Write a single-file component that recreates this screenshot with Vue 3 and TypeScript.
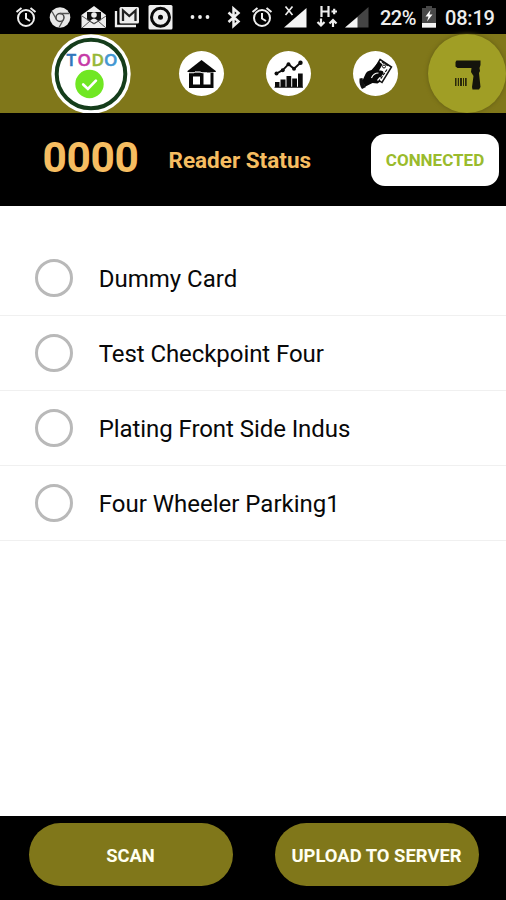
<script setup lang="ts">
interface Checkpoint {
  id: number
  name: string
  key: string
}

const checkpoints: Checkpoint[] = [
  { id: 1, name: 'Dummy Card', key: 'dummy' },
  { id: 2, name: 'Test Checkpoint Four', key: 'test' },
  { id: 3, name: 'Plating Front Side Indus', key: 'plating' },
  { id: 4, name: 'Four Wheeler Parking1', key: 'parking' },
]
</script>

<template>
  <div class="screen">
    <header class="status-bar">
      <svg class="system-icons" width="376" height="34" viewBox="0 0 376 34" fill="none" stroke="#eee" stroke-width="2">
        <g id="alarm">
          <circle cx="26" cy="18" r="8" />
          <path d="M26 13v5.500l4 2.500M16.500 12l5-4M35.500 12l-5-4" />
        </g>
        <circle cx="60" cy="17.500" r="10.300" fill="#e8e8e8" stroke="none" />
        <circle cx="60" cy="17.500" r="4" stroke="#444" stroke-width="1.500" />
        <path d="M60 13.500h9M56.500 19.500l-4.500-8M63.500 19.500l-4.500 8" stroke="#555" stroke-width="1.300" />
        <path d="M81.500 15L94 6l12 9v13H81.500z" fill="#eee" stroke="none" />
        <path d="M87 12h14v8l-7 4-7-4z" fill="#111" stroke="none" />
        <circle cx="94" cy="15" r="2.800" fill="#eee" stroke="none" />
        <path d="M90 21q4-5 8 0l-4 2z" fill="#eee" stroke="none" />
        <path d="M82 16l12 8 12-8M82 28l8-7M106 28l-8-7" stroke="#555" stroke-width="1" />
        <path d="M116 11v15h20" stroke-width="2.300" />
        <rect x="119.500" y="7" width="19.500" height="16.500" rx="1.500" fill="#eee" stroke="none" />
        <path d="M123 21V10.500l6.300 5.500 6.200-5.500V21" stroke="#222" stroke-width="2.300" />
        <rect x="148.500" y="5" width="24" height="24.500" rx="1.500" fill="#eee" stroke="none" />
        <circle cx="160.500" cy="17.300" r="9" stroke="#080808" stroke-width="3" />
        <circle cx="160.500" cy="17.300" r="2.500" fill="#080808" stroke="none" />
        <g fill="#eee" stroke="none"><circle cx="192.500" cy="17" r="1.900" /><circle cx="200" cy="17" r="1.900" /><circle cx="207.500" cy="17" r="1.900" /></g>
        <path d="M228.500 12.500l10 9-5 4.500V8.500l5 4.500-10 9" stroke-width="2.500" />
        <use href="#alarm" x="236" />
        <path d="M306.500 8v19.500H284z" fill="#f4f4f4" stroke="none" />
        <path d="M285.500 6.500l7 8.500M292.500 6.500l-7 8.500" stroke-width="1.700" />
        <path d="M321.500 6v11M328.500 6v11M321.500 11.500h7M331.500 11.500h5.500M334.200 8.800v5.400" stroke-width="2.200" />
        <path d="M321 18.500v7M317.500 22l3.500 3.500 3.500-3.500M333 27v-7M329.500 23.500L333 20l3.500 3.500" stroke-width="2.200" />
        <path d="M368.500 7v20.500H345z" fill="#444" stroke="none" />
        <path d="M357.500 17v10.500H345z" fill="#f4f4f4" stroke="none" />
      </svg>
      <span class="battery-level">22%</span>
      <svg class="battery" width="14" height="22" viewBox="0 0 14 22">
        <path d="M4 0h6v2h4v20H0V2h4z" fill="#484848" />
        <path d="M0 17h14v4.500H0z" fill="#f4f4f4" />
        <path d="M8.500 4L3.500 10.500H6.500L5 15.500l5.500-7H7.500z" fill="#fff" />
      </svg>
      <time class="clock">08:19</time>
    </header>

    <nav class="toolbar">
      <div class="logo">
        <svg class="logo-ring" width="80" height="80" viewBox="0 0 80 80">
          <circle cx="40" cy="40" r="39.700" fill="#fff" />
          <circle cx="40" cy="40" r="34.300" fill="none" stroke="#153d1b" stroke-width="4" />
          <circle cx="38.500" cy="50" r="14.200" fill="#70e722" />
          <path d="M32.200 50.500l4.700 4.400 8-8.300" fill="none" stroke="#fff" stroke-width="2.700" stroke-linecap="round" />
        </svg>
        <div class="logo-text"><b class="letter-t">T</b><b class="letter-o">O</b><b class="letter-d">D</b><b class="letter-last">O</b></div>
      </div>

      <button class="nav-button home" aria-label="Home">
        <svg width="45" height="45" viewBox="0 0 45 45">
          <path d="M8.500 20L22.500 9l14.300 11v1H8.500z" fill="#080808" />
          <path d="M10 21.500h24.500V37H10z" fill="#080808" />
          <path d="M14 25.500h7v8h-7zM24.500 22h7v11.500h-7z" fill="#fff" />
          <path d="M10 21.800h5l1-1h5l2 1h5" fill="none" stroke="#fff" stroke-width=".8" />
        </svg>
      </button>
      <button class="nav-button stats" aria-label="Statistics">
        <svg width="45" height="45" viewBox="0 0 45 45" fill="#0c0c0c">
          <path d="M9 31h4.500v5.500H9zM14.500 28.500h5v8h-5zM20.500 25h4.700v11.500h-4.700zM26.200 27.500h4.800v9h-4.800zM32 22.500h4.700v14H32zM8.500 35.800h28.500v1H8.500z" />
          <path d="M10.500 22.500l6.200-3.300 5.800-6 5.500 4.500 6.500-6" fill="none" stroke="#0c0c0c" stroke-width="1.900" />
          <circle cx="10.500" cy="22.500" r="2" /><circle cx="16.700" cy="19.200" r="2" /><circle cx="22.500" cy="13.200" r="2" /><circle cx="28" cy="17.700" r="2" /><circle cx="34.500" cy="11.700" r="2.200" />
        </svg>
      </button>
      <button class="nav-button pay" aria-label="Payment">
        <svg width="45" height="45" viewBox="0 0 45 45">
          <path d="M27 8.500L38.500 16 29 31.500 18 24z" fill="#fff" stroke="#111" stroke-width="1.500" />
          <path d="M29 11l6.500 4.300M34 18.500L27.500 28" fill="none" stroke="#111" stroke-width="1.200" stroke-dasharray="3 1" />
          <path d="M12.500 23q1-3 6-4l7.500-8.500 3.500 3-3.500 6q5-.5 4.500 3l-4 5 1 3-3 2-5-.5-7 3.500-3.500-5z" fill="#080808" />
          <path d="M18.500 27q2-5 7-5M24.500 29.500l2.500-3" fill="none" stroke="#fff" stroke-width="1.200" />
          <circle cx="31" cy="15.500" r="1.500" fill="none" stroke="#111" />
          <path d="M6.500 27.500l3-.5q1 6 3.500 9l-4 2q-3-4-2.500-10.500z" fill="#111" />
        </svg>
      </button>
      <button class="nav-button scanner" aria-label="Scanner">
        <svg width="78" height="79" viewBox="0 0 78 79">
          <path d="M28.500 26.500h24v4.500l-1 3 .5 3-1 2 1.500 14-1.500 2.500h-6.500l-.5-2.500 1.500-11-2.500-4 .5-4H29.500l-2-1.500v-4.500z" fill="#15140c" />
          <path d="M27 44h1.500v8H27zM29.800 44h1.200v8h-1.200zM32 44h2v8h-2zM35 44h1v8h-1zM37 44h1.700v8H37z" fill="#2b290b" />
        </svg>
      </button>
    </nav>

    <section class="reader">
      <strong class="count">0000</strong>
      <span class="reader-label">Reader Status</span>
      <span class="connection">CONNECTED</span>
    </section>

    <main class="list">
      <label v-for="item in checkpoints" :key="item.id" class="row">
        <span class="radio"></span>
        <span class="row-name" :class="item.key">{{ item.name }}</span>
      </label>
    </main>

    <footer class="actions">
      <button class="action scan">SCAN</button>
      <button class="action upload">UPLOAD TO SERVER</button>
    </footer>
  </div>
</template>

<style>
body {
  margin: 0;
}
</style>

<style scoped>
.screen {
  width: 506px;
  height: 900px;
  display: flex;
  flex-direction: column;
  overflow: hidden;
  background: #fff;
  font-family: Roboto, sans-serif;
}
button {
  border: 0;
  padding: 0;
  font-family: inherit;
}
svg {
  display: block;
  flex: none;
}
.status-bar {
  height: 34px;
  flex: none;
  display: flex;
  align-items: center;
  background: #000;
  color: #eee;
  font-size: 20px;
  font-weight: 500;
  line-height: 34px;
}
.battery-level {
  width: 46px;
  padding-left: 4px;
  box-sizing: border-box;
  letter-spacing: -0.5px;
  padding-top: 2px;
}
.clock {
  margin-left: 9px;
  padding-top: 2px;
  letter-spacing: -0.2px;
}
.toolbar {
  height: 79px;
  flex: none;
  display: flex;
  align-items: center;
  background: #80771a;
}
.logo {
  position: relative;
  width: 80px;
  height: 80px;
  margin-left: 50.500px;
}
.logo-text {
  position: absolute;
  top: 15px;
  left: 16px;
  width: 54px;
  display: flex;
  font: 600 17px/21px "Open Sans", sans-serif;
}
.logo-text b {
  font-weight: 600;
  -webkit-text-stroke: 0.5px currentColor;
}
.letter-t { color: #3177bc; width: 11px; }
.letter-o { color: #c63aa6; width: 14px; }
.letter-d { color: #96b737; width: 12.500px; }
.letter-last { color: #4297d2; }
.nav-button {
  width: 45px;
  height: 45px;
  flex: none;
  border-radius: 50%;
  background: #fff;
}
.home { margin-left: 48.500px; }
.stats { margin-left: 42.200px; }
.pay { margin-left: 42.300px; }
.scanner {
  width: 78px;
  height: 79px;
  margin-left: 29.500px;
  background: #a09e25;
  box-shadow: 0 0 4px #625c15;
}
.reader {
  position: relative;
  height: 93px;
  flex: none;
  display: flex;
  align-items: center;
  background: #000;
  color: #f6bd61;
}
.count {
  width: 126px;
  margin-left: 42.500px;
  font-size: 42.500px;
  line-height: 50px;
  letter-spacing: -0.4px;
  padding-bottom: 3px;
  box-sizing: border-box;
}
.reader-label {
  width: 202.500px;
  font-size: 22.500px;
  font-weight: 700;
  padding-top: 1px;
}
.connection {
  width: 128px;
  height: 52px;
  border-radius: 14px;
  background: #fff;
  color: #9abb2c;
  display: grid;
  place-items: center;
  font-size: 17px;
  font-weight: 700;
}
.list {
  flex: 1;
  padding-top: 34.500px;
}
.row {
  height: 75.200px;
  box-sizing: border-box;
  display: flex;
  align-items: center;
  padding-left: 35px;
  border-bottom: 1px solid #f0f0f0;
}
.radio {
  width: 38px;
  height: 38px;
  box-sizing: border-box;
  border: 3px solid #b9b9b9;
  border-radius: 50%;
}
.row-name {
  margin-left: 25.700px;
  padding-top: 2px;
  font-size: 24px;
  color: #080808;
  white-space: nowrap;
}
.test, .plating {
  letter-spacing: -0.070px;
}
.actions {
  height: 84px;
  flex: none;
  box-sizing: border-box;
  display: flex;
  gap: 42px;
  padding: 7px 0 0 28.500px;
  background: #000;
}
.action {
  width: 204px;
  height: 63px;
  border-radius: 32px;
  background: #80771a;
  color: #fffff0;
  font-size: 18.400px;
  font-weight: 700;
  padding-top: 1px;
}
</style>
